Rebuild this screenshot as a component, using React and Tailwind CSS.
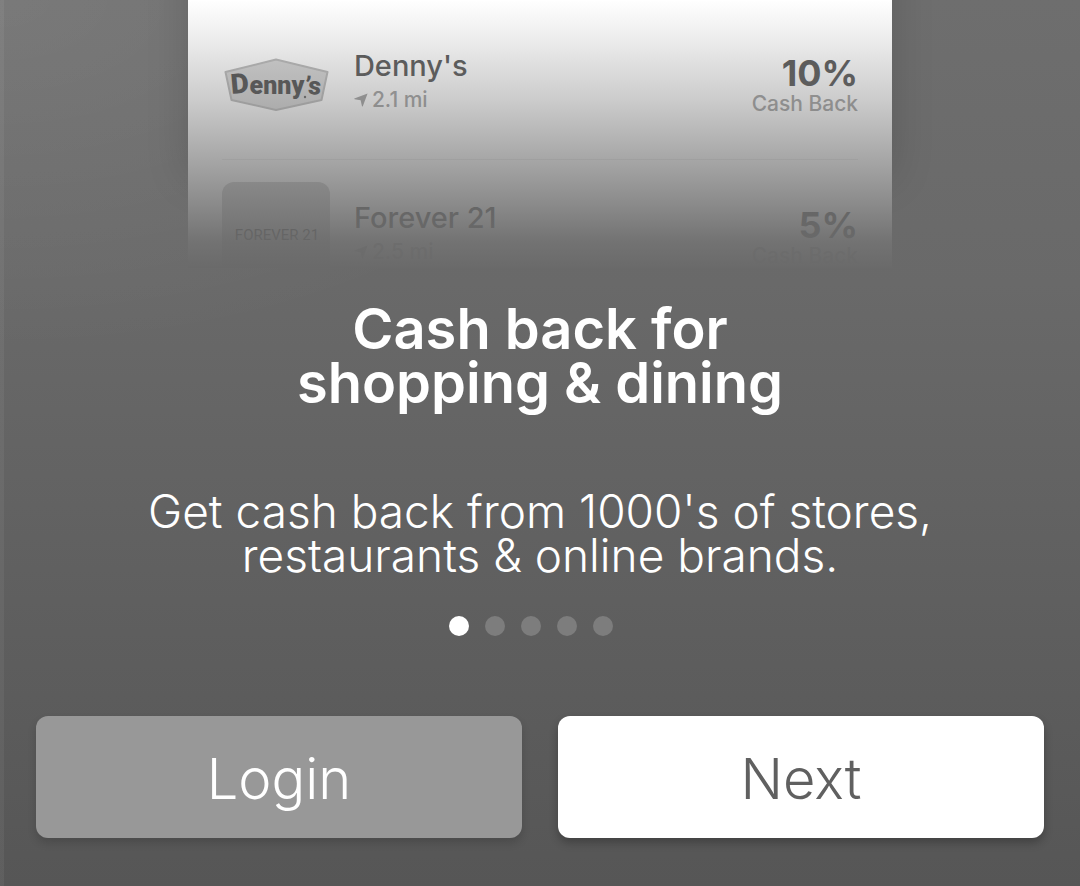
const offers = [
  { id: "dennys", name: "Denny's", distance: "2.1 mi", rate: "10%" },
  { id: "forever21", name: "Forever 21", distance: "2.5 mi", rate: "5%" },
];

const slides = [1, 2, 3, 4, 5];

function DennysLogo() {
  return (
    <svg viewBox="0 0 108 108" className="size-27 shrink-0" role="img" aria-label="Denny's logo">
      <path d="M54 29.5 L105.5 42 L99.5 70 L54 80 L9.5 70 L3.5 42 Z" fill="#d6d6d6" stroke="#bababa" strokeWidth="2" strokeLinejoin="round" />
      <text x="54" y="64" textAnchor="middle" fontSize="25" fontFamily="Roboto, sans-serif" fontWeight="900" fill="#505050">
        <tspan fontSize="28" rotate="-5">D</tspan>
        <tspan>enny</tspan>
        <tspan rotate="4">’s</tspan>
      </text>
      <circle cx="83" cy="67" r="1.2" fill="#666" />
    </svg>
  );
}

function ForeverLogo() {
  return (
    <div className="size-27 shrink-0 rounded-xl bg-[#cccccc]">
      <svg viewBox="0 0 108 108" className="size-27" role="img" aria-label="Forever 21 logo">
        <text x="55" y="58" textAnchor="middle" fontSize="15" fill="#333" fontFamily="Roboto, sans-serif">
          FOREVER 21
        </text>
      </svg>
    </div>
  );
}

function LocationArrow() {
  return (
    <svg viewBox="0 0 14 14" className="size-3.5" aria-hidden="true">
      <path d="M13.6 0.4 L0.3 5.6 Q0 6 0.6 6.2 L6.6 7.2 L8 13.3 Q8.4 13.9 8.8 13.3 Z" fill="currentColor" />
    </svg>
  );
}

function OfferRow({ offer }) {
  return (
    <li className="flex gap-6 border-b border-[#eeeeee] pt-[22px] pb-[21px]">
      {offer.id === "dennys" ? <DennysLogo /> : <ForeverLogo />}
      <div className="flex-1 pt-5">
        <p className="text-[29px] leading-8 font-medium text-[#585858]">{offer.name}</p>
        <p className="flex items-center gap-1 pt-1 text-[21px] leading-7 font-medium text-[#a2a2a2]">
          <LocationArrow />
          {offer.distance}
        </p>
      </div>
      <div className="pt-6 text-right">
        <p className="text-4xl leading-[38px] font-bold text-[#585858]">{offer.rate}</p>
        <p className="text-[21px] leading-6 font-medium text-[#a2a2a2]">Cash Back</p>
      </div>
    </li>
  );
}

export default function App() {
  return (
    <main className="flex min-h-screen flex-col bg-[linear-gradient(to_right,rgba(255,255,255,0.05)_4px,transparent_4px),radial-gradient(ellipse_60%_40%_at_top_left,rgba(255,255,255,0.08),transparent),linear-gradient(to_bottom,#6e6e6e_0%,#696969_32%,#565656_100%)] font-['Inter','Open_Sans',sans-serif] text-white">
      <section className="relative mx-auto h-67 w-[65.2%] bg-white px-[34px] pt-2 shadow-[0_-90px_40px_rgba(0,0,0,0.15)]">
        <ul className="h-65 overflow-hidden">
          {offers.map((offer) => (
            <OfferRow key={offer.id} offer={offer} />
          ))}
        </ul>
        <div className="pointer-events-none absolute inset-0 bg-[linear-gradient(to_bottom,rgba(106,106,106,0)_0%,rgba(106,106,106,0.13)_15%,rgba(106,106,106,0.34)_37%,rgba(106,106,106,0.6)_60%,rgba(106,106,106,0.77)_75%,rgba(106,106,106,0.94)_90%,rgba(106,106,106,1)_100%)]" />
      </section>

      <section className="px-8 pt-[34px] text-center">
        <h1 className="text-[56px] leading-[54px] font-semibold">
          Cash back for
          <br />
          shopping &amp; dining
        </h1>
        <p className="pt-[79px] text-[46px] leading-11 font-light">
          Get cash back from 1000's of stores,
          <br />
          restaurants &amp; online brands.
        </p>
      </section>

      <nav aria-label="Slides" className="mr-[18px] flex items-center justify-center gap-4 pt-[39px]">
        {slides.map((slide) => (
          <button
            key={slide}
            type="button"
            aria-label={`Slide ${slide}`}
            aria-current={slide === 1}
            className={
              slide === 1
                ? "size-5 rounded-full bg-white"
                : "size-5 rounded-full bg-[#7d7d7d]"
            }
          />
        ))}
      </nav>

      <div className="mt-auto grid grid-cols-2 gap-9 px-9 pt-18 pb-12">
        <button type="button" className="h-[122px] rounded-xl bg-[#989898] pt-1 text-[56px] font-light text-white shadow-[0_5px_8px_rgba(0,0,0,0.15)]">
          Login
        </button>
        <button type="button" className="h-[122px] rounded-xl bg-white pt-1 text-[56px] font-light text-[#606060] shadow-[0_5px_8px_rgba(0,0,0,0.25)]">
          Next
        </button>
      </div>
    </main>
  );
}
